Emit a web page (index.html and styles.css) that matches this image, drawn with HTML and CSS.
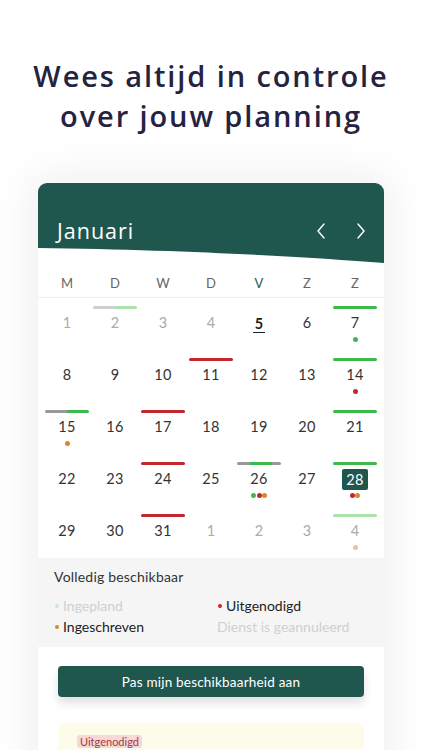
FILE: index.html
```html
<!DOCTYPE html>
<html lang="nl">
<head>
<meta charset="utf-8">
<link rel="stylesheet" href="styles.css">
</head>
<body>
<h1 class="title">Wees altijd in controle<br>over jouw planning</h1>
<div class="card">
  <div class="head">
    <span class="month">Januari</span>
    <div class="arrows">
      <svg width="12" height="18" viewBox="0 0 12 18"><path d="M9 2 L3 9 L9 16" fill="none" stroke="#fff" stroke-width="1.4" stroke-linecap="round" stroke-linejoin="round"/></svg>
      <svg width="12" height="18" viewBox="0 0 12 18"><path d="M3 2 L9 9 L3 16" fill="none" stroke="#fff" stroke-width="1.4" stroke-linecap="round" stroke-linejoin="round"/></svg>
    </div>
  </div>
  <svg class="wave" width="346" height="16" viewBox="0 0 346 16" preserveAspectRatio="none"><path d="M0 0 H346 V16 C270 10 150 3 0 1 Z" fill="#1f574e"/></svg>
  <div class="weekdays">
    <span>M</span><span>D</span><span>W</span><span>D</span><span class="today">V</span><span>Z</span><span>Z</span>
  </div>
  <div class="grid">
    <div class="cell"><div class="bar"></div><div class="num past">1</div></div>
    <div class="cell"><div class="bar b-past"></div><div class="num past">2</div></div>
    <div class="cell"><div class="bar"></div><div class="num past">3</div></div>
    <div class="cell"><div class="bar"></div><div class="num past">4</div></div>
    <div class="cell"><div class="bar"></div><div class="num"><span class="now">5</span></div></div>
    <div class="cell"><div class="bar"></div><div class="num">6</div></div>
    <div class="cell"><div class="bar g"></div><div class="num">7</div><div class="dots"><i class="dg"></i></div></div>

    <div class="cell"><div class="bar"></div><div class="num">8</div></div>
    <div class="cell"><div class="bar"></div><div class="num">9</div></div>
    <div class="cell"><div class="bar"></div><div class="num">10</div></div>
    <div class="cell"><div class="bar r"></div><div class="num">11</div></div>
    <div class="cell"><div class="bar"></div><div class="num">12</div></div>
    <div class="cell"><div class="bar"></div><div class="num">13</div></div>
    <div class="cell"><div class="bar g"></div><div class="num">14</div><div class="dots"><i class="dr"></i></div></div>

    <div class="cell"><div class="bar b-half"></div><div class="num">15</div><div class="dots"><i class="do"></i></div></div>
    <div class="cell"><div class="bar"></div><div class="num">16</div></div>
    <div class="cell"><div class="bar r"></div><div class="num">17</div></div>
    <div class="cell"><div class="bar"></div><div class="num">18</div></div>
    <div class="cell"><div class="bar"></div><div class="num">19</div></div>
    <div class="cell"><div class="bar"></div><div class="num">20</div></div>
    <div class="cell"><div class="bar g"></div><div class="num">21</div></div>

    <div class="cell"><div class="bar"></div><div class="num">22</div></div>
    <div class="cell"><div class="bar"></div><div class="num">23</div></div>
    <div class="cell"><div class="bar r"></div><div class="num">24</div></div>
    <div class="cell"><div class="bar"></div><div class="num">25</div></div>
    <div class="cell"><div class="bar b-mid"></div><div class="num">26</div><div class="dots"><i class="dg"></i><i class="dr"></i><i class="do"></i></div></div>
    <div class="cell"><div class="bar"></div><div class="num">27</div></div>
    <div class="cell"><div class="bar g"></div><div class="num"><span class="sel">28</span></div><div class="dots"><i class="dr"></i><i class="do"></i></div></div>

    <div class="cell"><div class="bar"></div><div class="num">29</div></div>
    <div class="cell"><div class="bar"></div><div class="num">30</div></div>
    <div class="cell"><div class="bar r"></div><div class="num">31</div></div>
    <div class="cell"><div class="bar"></div><div class="num next">1</div></div>
    <div class="cell"><div class="bar"></div><div class="num next">2</div></div>
    <div class="cell"><div class="bar"></div><div class="num next">3</div></div>
    <div class="cell"><div class="bar lg"></div><div class="num next">4</div><div class="dots"><i class="dlo"></i></div></div>
  </div>
  <div class="legend">
    <div class="legend-title">Volledig beschikbaar</div>
    <div class="legend-grid">
      <div class="item faded"><i class="dlg"></i>Ingepland</div>
      <div class="item"><i class="dr"></i>Uitgenodigd</div>
      <div class="item"><i class="do"></i>Ingeschreven</div>
      <div class="item faded">Dienst is geannuleerd</div>
    </div>
  </div>
  <div class="actions">
    <button class="btn">Pas mijn beschikbaarheid aan</button>
    <div class="invite">
      <span class="badge">Uitgenodigd</span>
    </div>
  </div>
</div>
</body>
</html>
```

FILE: styles.css
```css
* { box-sizing: border-box; }
html, body { margin: 0; padding: 0; background: #fff; }
body {
  width: 422px;
  height: 750px;
  overflow: hidden;
  font-family: Lato, "Noto Sans", sans-serif;
  color: #333;
}
.title {
  margin: 0;
  padding-top: 56px;
  text-align: center;
  font-family: "Open Sans", "Noto Sans", sans-serif;
  font-size: 29px;
  line-height: 40px;
  font-weight: 600;
  color: #25233f;
  letter-spacing: 1.9px;
}
.card {
  margin: 47px 0 0 38px;
  width: 346px;
  background: #fff;
  border-radius: 9px 9px 0 0;
  box-shadow: 0 0 40px 10px rgba(0, 0, 0, 0.06);
}
.head {
  height: 64px;
  background: #1f574e;
  border-radius: 9px 9px 0 0;
  padding: 31px 17px 0 19px;
  display: flex;
  justify-content: space-between;
  align-items: flex-start;
}
.month {
  color: #fff;
  font-family: "Open Sans", "Noto Sans", sans-serif;
  font-size: 21.5px;
  line-height: 33px;
  height: 33px;
  letter-spacing: 1px;
}
.arrows {
  display: flex;
  gap: 28px;
  padding-top: 8px;
}
.arrows svg { display: block; }
.wave { display: block; }
.weekdays {
  display: grid;
  grid-template-columns: repeat(7, 48px);
  padding: 13px 5px 7px;
  border-bottom: 1px solid #eee;
  font-size: 13px;
  line-height: 14px;
  color: #666;
  text-align: center;
}
.weekdays .today { color: #1f574e; }
.grid {
  display: grid;
  grid-template-columns: repeat(7, 48px);
  grid-auto-rows: 52px;
  padding: 0 5px;
}
.cell {
  display: flex;
  flex-direction: column;
  align-items: center;
}
.bar {
  margin-top: 8px;
  width: 44px;
  height: 3px;
  border-radius: 2px;
}
.bar.g { background: #3dba4b; }
.bar.r { background: #c1272d; }
.bar.lg { background: #a9e2ac; }
.bar.b-past { background: linear-gradient(to right, #cfcfcf 50%, #a9e2ac 50%); }
.bar.b-half { background: linear-gradient(to right, #999 50%, #3dba4b 50%); }
.bar.b-mid { background: linear-gradient(to right, #999 30%, #3dba4b 30%, #3dba4b 80%, #999 80%); }
.num {
  margin-top: 5px;
  height: 18px;
  line-height: 18px;
  font-size: 14.5px;
  color: #333;
  display: flex;
  align-items: center;
  justify-content: center;
  letter-spacing: 0.3px;
}
.num.past, .num.next { color: #aaa; }
.num .now {
  font-weight: 700;
  color: #222;
  border-bottom: 1.5px solid #222;
  line-height: 17px;
  padding: 0 2px;
  margin-top: 2px;
}
.num .sel {
  background: #1f574e;
  color: #fff;
  border-radius: 2px;
  padding: 0 4px;
  line-height: 21px;
  height: 21px;
}
.dots {
  margin-top: 5px;
  display: flex;
  gap: 0.5px;
}
i {
  display: block;
  width: 5px;
  height: 5px;
  border-radius: 50%;
}
.dg { background: #3dba4b; }
.dr { background: #c62828; }
.do { background: #d38b2b; }
.dlo { background: #e5c893; }
.dlg { background: #c8ebc9; }
.legend {
  background: #f5f5f5;
  padding: 11px 16px;
}
.legend-title {
  font-size: 14px;
  line-height: 16px;
  color: #333;
  letter-spacing: 0.2px;
}
.legend-grid {
  margin-top: 12px;
  display: grid;
  grid-template-columns: 163px 1fr;
  row-gap: 3px;
}
.item {
  display: flex;
  align-items: center;
  gap: 4px;
  font-size: 14px;
  line-height: 18px;
  color: #222;
}
.item.faded { color: #d0d0d0; }
.item i { width: 4px; height: 4px; margin-left: 1px; }
.actions {
  padding: 19px 20px 0;
}
.btn {
  display: block;
  width: 100%;
  height: 31px;
  border: 0;
  border-radius: 4px;
  background: #1f574e;
  color: #fff;
  font-family: Lato, "Noto Sans", sans-serif;
  font-size: 13.5px;
  letter-spacing: 0.2px;
  box-shadow: 0 6px 10px rgba(0, 0, 0, 0.12);
}
.invite {
  margin-top: 26px;
  height: 60px;
  background: #fdfbea;
  border-radius: 6px 6px 0 0;
  padding: 12px 19px;
  display: flex;
  align-items: flex-start;
}
.badge {
  display: block;
  background: #f7d8d8;
  color: #a33b3b;
  font-size: 11px;
  line-height: 13px;
  padding: 0 3px;
  border-radius: 3px;
}
```
